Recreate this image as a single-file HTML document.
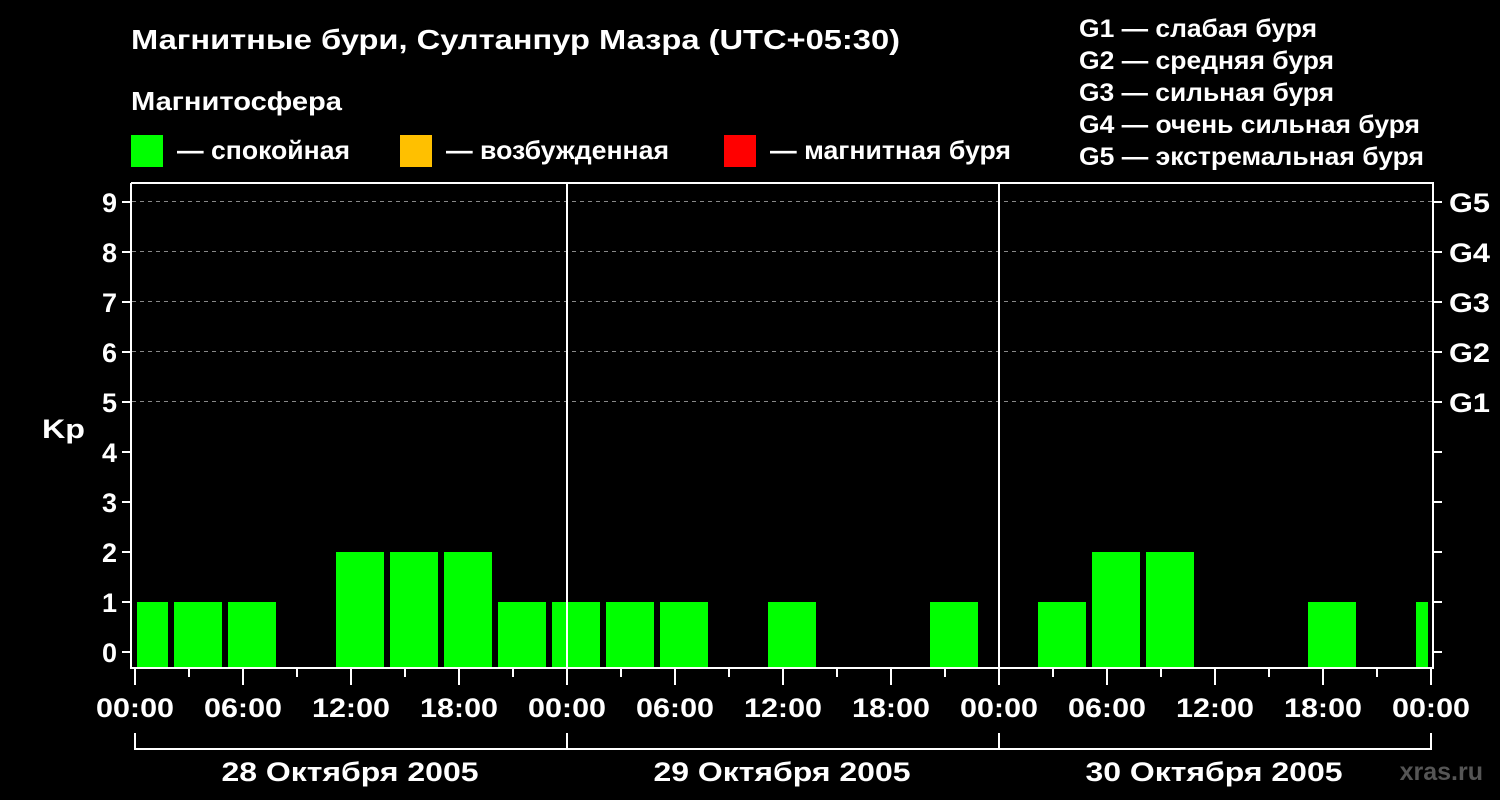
<!DOCTYPE html>
<html><head><meta charset="utf-8"><style>
body{margin:0;background:#000;width:1500px;height:800px;overflow:hidden}
svg{display:block}
text{font-family:"Liberation Sans",sans-serif;font-weight:bold;fill:#fff}
</style></head><body>
<svg width="1500" height="800" viewBox="0 0 1500 800">
<rect width="1500" height="800" fill="#000"/>
<text x="131" y="49" font-size="28" textLength="769" lengthAdjust="spacingAndGlyphs">Магнитные бури, Султанпур Мазра (UTC+05:30)</text>
<text x="131" y="110" font-size="26" textLength="211" lengthAdjust="spacingAndGlyphs">Магнитосфера</text>
<rect x="131" y="135" width="32" height="32" fill="#00ff00"/>
<text x="177" y="159" font-size="26" textLength="173" lengthAdjust="spacingAndGlyphs">— спокойная</text>
<rect x="400" y="135" width="32" height="32" fill="#ffc000"/>
<text x="446" y="159" font-size="26" textLength="223" lengthAdjust="spacingAndGlyphs">— возбужденная</text>
<rect x="724" y="135" width="32" height="32" fill="#ff0000"/>
<text x="770" y="159" font-size="26" textLength="241" lengthAdjust="spacingAndGlyphs">— магнитная буря</text>
<g font-size="25">
<text x="1079" y="37" textLength="238" lengthAdjust="spacingAndGlyphs">G1 — слабая буря</text>
<text x="1079" y="69" textLength="255" lengthAdjust="spacingAndGlyphs">G2 — средняя буря</text>
<text x="1079" y="101" textLength="255" lengthAdjust="spacingAndGlyphs">G3 — сильная буря</text>
<text x="1079" y="133" textLength="341" lengthAdjust="spacingAndGlyphs">G4 — очень сильная буря</text>
<text x="1079" y="165" textLength="345" lengthAdjust="spacingAndGlyphs">G5 — экстремальная буря</text>
</g>
<g stroke="#888" stroke-dasharray="4,4" stroke-width="1">
<line x1="132" x2="1432" y1="201.5" y2="201.5"/><line x1="132" x2="1432" y1="251.5" y2="251.5"/>
<line x1="132" x2="1432" y1="301.5" y2="301.5"/><line x1="132" x2="1432" y1="351.5" y2="351.5"/>
<line x1="132" x2="1432" y1="401.5" y2="401.5"/>
</g>
<g fill="#00ff00">
<rect x="137" y="602" width="31" height="66"/>
<rect x="174" y="602" width="48" height="66"/>
<rect x="228" y="602" width="48" height="66"/>
<rect x="336" y="552" width="48" height="116"/>
<rect x="390" y="552" width="48" height="116"/>
<rect x="444" y="552" width="48" height="116"/>
<rect x="498" y="602" width="48" height="66"/>
<rect x="552" y="602" width="48" height="66"/>
<rect x="606" y="602" width="48" height="66"/>
<rect x="660" y="602" width="48" height="66"/>
<rect x="768" y="602" width="48" height="66"/>
<rect x="930" y="602" width="48" height="66"/>
<rect x="1038" y="602" width="48" height="66"/>
<rect x="1092" y="552" width="48" height="116"/>
<rect x="1146" y="552" width="48" height="116"/>
<rect x="1308" y="602" width="48" height="66"/>
<rect x="1416" y="602" width="12" height="66"/>
</g>
<g stroke="#fff" stroke-width="2" fill="none">
<path d="M131 183V668H1433V183H131"/>
<line x1="567" y1="183" x2="567" y2="668"/>
<line x1="999" y1="183" x2="999" y2="668"/>
<path d="M135 733V749H1431V733M567 733V749M999 733V749"/>
</g>
<g stroke="#fff" stroke-width="2">
<path d="M122 652h9M122 602h9M122 552h9M122 502h9M122 452h9M122 402h9M122 352h9M122 302h9M122 252h9M122 202h9M1433 652h9M1433 602h9M1433 552h9M1433 502h9M1433 452h9M1433 402h9M1433 352h9M1433 302h9M1433 252h9M1433 202h9"/>
<path d="M135 668v17M189 668v9M243 668v17M297 668v9M351 668v17M405 668v9M459 668v17M513 668v9M567 668v17M621 668v9M675 668v17M729 668v9M783 668v17M837 668v9M891 668v17M945 668v9M999 668v17M1053 668v9M1107 668v17M1161 668v9M1215 668v17M1269 668v9M1323 668v17M1377 668v9M1431 668v17"/>
</g>
<g font-size="27" text-anchor="end">
<text x="117" y="662">0</text><text x="117" y="612">1</text><text x="117" y="562">2</text>
<text x="117" y="512">3</text><text x="117" y="462">4</text><text x="117" y="412">5</text>
<text x="117" y="362">6</text><text x="117" y="312">7</text><text x="117" y="262">8</text>
<text x="117" y="212">9</text>
</g>
<text x="42" y="438" font-size="27" textLength="43" lengthAdjust="spacingAndGlyphs">Kp</text>
<g font-size="27">
<text x="1449" y="212" textLength="41" lengthAdjust="spacingAndGlyphs">G5</text><text x="1449" y="262" textLength="41" lengthAdjust="spacingAndGlyphs">G4</text><text x="1449" y="312" textLength="41" lengthAdjust="spacingAndGlyphs">G3</text>
<text x="1449" y="362" textLength="41" lengthAdjust="spacingAndGlyphs">G2</text><text x="1449" y="412" textLength="41" lengthAdjust="spacingAndGlyphs">G1</text>
</g>
<g font-size="27" text-anchor="middle">
<text x="135" y="717" textLength="78" lengthAdjust="spacingAndGlyphs">00:00</text><text x="243" y="717" textLength="78" lengthAdjust="spacingAndGlyphs">06:00</text><text x="351" y="717" textLength="78" lengthAdjust="spacingAndGlyphs">12:00</text>
<text x="459" y="717" textLength="78" lengthAdjust="spacingAndGlyphs">18:00</text><text x="567" y="717" textLength="78" lengthAdjust="spacingAndGlyphs">00:00</text><text x="675" y="717" textLength="78" lengthAdjust="spacingAndGlyphs">06:00</text>
<text x="783" y="717" textLength="78" lengthAdjust="spacingAndGlyphs">12:00</text><text x="891" y="717" textLength="78" lengthAdjust="spacingAndGlyphs">18:00</text><text x="999" y="717" textLength="78" lengthAdjust="spacingAndGlyphs">00:00</text>
<text x="1107" y="717" textLength="78" lengthAdjust="spacingAndGlyphs">06:00</text><text x="1215" y="717" textLength="78" lengthAdjust="spacingAndGlyphs">12:00</text><text x="1323" y="717" textLength="78" lengthAdjust="spacingAndGlyphs">18:00</text>
<text x="1431" y="717" textLength="78" lengthAdjust="spacingAndGlyphs">00:00</text>
<text x="350" y="781" textLength="257" lengthAdjust="spacingAndGlyphs">28 Октября 2005</text>
<text x="782" y="781" textLength="257" lengthAdjust="spacingAndGlyphs">29 Октября 2005</text>
<text x="1214" y="781" textLength="257" lengthAdjust="spacingAndGlyphs">30 Октября 2005</text>
</g>
<text x="1483" y="780" font-size="25" text-anchor="end" style="fill:#555">xras.ru</text>
</svg>
</body></html>
